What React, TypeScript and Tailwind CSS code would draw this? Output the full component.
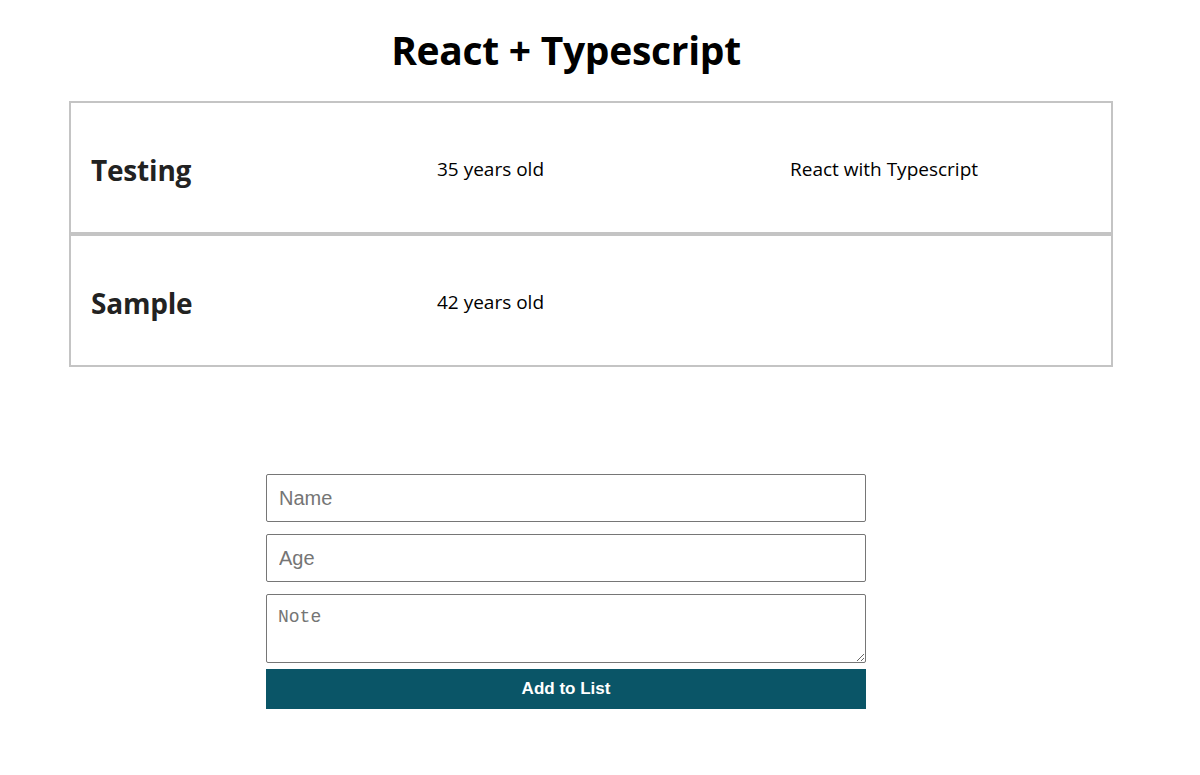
const people = [
  { name: "Testing", age: 35, note: "React with Typescript" },
  { name: "Sample", age: 42, note: "" },
];

export default function App() {
  return (
    <div className="min-h-screen bg-white font-['Open_Sans',sans-serif] text-[#222]">
      <h1 className="w-[1132px] pt-[26px] text-center text-[39px] font-bold leading-[48px] text-black tracking-[-0.3px]">
        React + Typescript
      </h1>
      <ul className="ml-[69px] mt-[27px] w-[1044px]">
        {people.map((p) => (
          <li
            key={p.name}
            className="grid h-[133px] grid-cols-[346px_353px_1fr] items-center border-2 border-[#c4c4c4] pl-[20px] pt-[4px]"
          >
            <h2 className="text-[28px] font-bold tracking-[-0.2px] text-[#222]">{p.name}</h2>
            <p className="text-[19px] text-black">{p.age} years old</p>
            <p className="text-[19px] text-black">{p.note}</p>
          </li>
        ))}
      </ul>
      <form className="ml-[266px] mt-[107px] flex w-[600px] flex-col">
        <input
          placeholder="Name"
          className="h-[48px] rounded-[2px] border border-[#767676] px-[12px] font-['Liberation_Sans',sans-serif] text-[20px] placeholder:text-[#757575]"
        />
        <input
          placeholder="Age"
          className="mt-[12px] h-[48px] rounded-[2px] border border-[#767676] px-[12px] font-['Liberation_Sans',sans-serif] text-[20px] placeholder:text-[#757575]"
        />
        <textarea
          placeholder="Note"
          className="mt-[12px] h-[69px] rounded-[2px] border border-[#767676] px-[11px] py-[9px] font-['Liberation_Mono',monospace] text-[18px] placeholder:text-[#757575]"
        />
        <button
          type="button"
          className="mt-[6px] h-[40px] bg-[#0a5567] font-['Liberation_Sans',sans-serif] text-[17px] font-bold text-white"
        >
          Add to List
        </button>
      </form>
    </div>
  );
}
